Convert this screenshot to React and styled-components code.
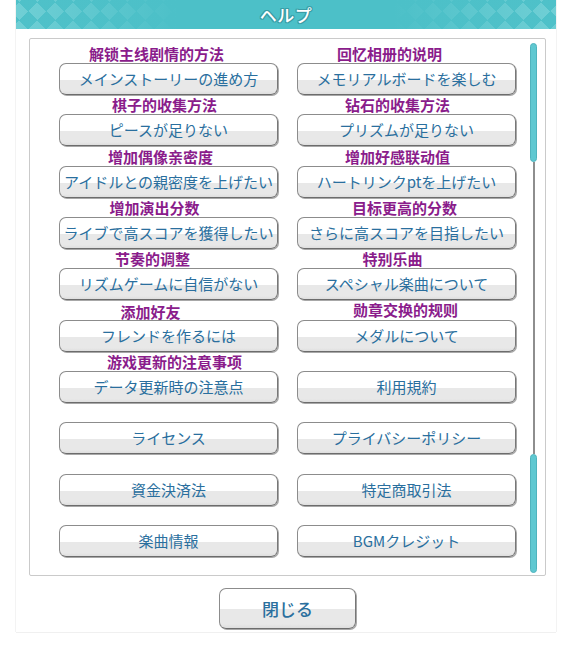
import React from "react";
import styled, { createGlobalStyle } from "styled-components";

const Global = createGlobalStyle`
  html, body { margin: 0; padding: 0; background: #ffffff; }
  body { font-family: "Noto Sans CJK JP", "Noto Sans", sans-serif; }
  * { box-sizing: border-box; }
`;

const Page = styled.div`
  width: 580px;
  height: 649px;
  background: #ffffff;
  overflow: hidden;
`;

const Dialog = styled.div`
  margin-left: 16px;
  width: 540px;
  height: 632px;
  background: #ffffff;
  box-shadow: 0 1px 0 #f0f0f0, 1px 0 0 #f3f3f3, -1px 0 0 #f3f3f3;
  display: flex;
  flex-direction: column;
`;

const Header = styled.div`
  height: 29px;
  display: flex;
  align-items: center;
  justify-content: center;
  background:
    linear-gradient(90deg, rgba(76,192,200,0) 0%, #4cc0c8 30%, #4cc0c8 70%, rgba(76,192,200,0) 100%),
    conic-gradient(from 45deg, #70cfd5 25%, #4fc1c9 0 50%, #70cfd5 0 75%, #4fc1c9 0);
  background-size: 100% 100%, 18px 18px;
  background-position: 0 0, 3px 2px;
`;

const Title = styled.h1`
  margin: 0;
  font-family: "Noto Sans CJK JP", sans-serif;
  font-size: 17px;
  font-weight: 500;
  line-height: 1;
  color: #ffffff;
  letter-spacing: 0.5px;
  text-shadow:
    1px 0 0 #3a9da6, -1px 0 0 #3a9da6, 0 1px 0 #3a9da6, 0 -1px 0 #3a9da6,
    1px 1px 0 #3a9da6, -1px -1px 0 #3a9da6, 1px -1px 0 #3a9da6, -1px 1px 0 #3a9da6;
`;

const Body = styled.div`
  padding: 9px 10px 0 13px;
`;

const ListBox = styled.div`
  height: 538px;
  border: 1px solid #cacaca;
  border-radius: 2px;
  display: flex;
`;

const Grid = styled.div`
  flex: 1;
  padding: 5px 0 0 29px;
  display: grid;
  grid-template-columns: 219px 219px;
  column-gap: 19px;
  row-gap: 0.33px;
  align-content: start;
`;

const Cell = styled.div`
  display: flex;
  flex-direction: column;
`;

const Label = styled.div`
  height: 19px;
  line-height: 19px;
  text-align: center;
  font-family: "Noto Sans CJK SC", sans-serif;
  font-size: 15px;
  font-weight: 700;
  color: #8a1c8b;
  white-space: nowrap;
  transform: translate(${(p) => p.$dx || 0}px, ${(p) => p.$dy || 0}px);
`;

const Button = styled.button`
  display: flex;
  align-items: center;
  justify-content: center;
  width: ${(p) => p.$w || 219}px;
  height: ${(p) => p.$h || 32}px;
  padding: 0 0 1px;
  border: 1px solid #8c8c8c;
  border-bottom-color: #6c6c6c;
  border-right-color: #777777;
  border-radius: 7px;
  box-shadow: 1px 1px 0 #a8a8a8;
  background: linear-gradient(180deg, #ffffff 0%, #ffffff 52%, #e8e8e8 52%, #e8e8e8 90%, #dedede 100%);
  font-family: "Noto Sans CJK JP", sans-serif;
  font-size: ${(p) => p.$fs || 15}px;
  font-weight: ${(p) => p.$fw || 400};
  color: #2a6f9e;
  white-space: nowrap;
  cursor: pointer;
`;

const Scroll = styled.div`
  width: 7px;
  margin: 4px 8px 2px 14px;
  display: flex;
  flex-direction: column;
  align-items: center;
`;

const Thumb = styled.div`
  width: 7px;
  height: 119px;
  border-radius: 4px;
  background: #5fc8d1;
  border: 1px solid #4fb3bd;
  flex-shrink: 0;
`;

const Track = styled.div`
  width: 2px;
  flex: 1;
  background: #8e8e8e;
`;

const Footer = styled.div`
  display: flex;
  justify-content: center;
  padding: 12px 0 0 3px;
`;

const items = [
  { label: "解锁主线剧情的方法", dx: -12, text: "メインストーリーの進め方" },
  { label: "回忆相册的说明", dx: -17, text: "メモリアルボードを楽しむ" },
  { label: "棋子的收集方法", dx: -4, text: "ピースが足りない" },
  { label: "钻石的收集方法", dx: -9, text: "プリズムが足りない" },
  { label: "增加偶像亲密度", dx: -8, text: "アイドルとの親密度を上げたい" },
  { label: "增加好感联动值", dx: -9, text: "ハートリンクptを上げたい" },
  { label: "增加演出分数", dx: -14, text: "ライブで高スコアを獲得したい" },
  { label: "目标更高的分数", dx: -2, text: "さらに高スコアを目指したい" },
  { label: "节奏的调整", dx: -16, text: "リズムゲームに自信がない" },
  { label: "特别乐曲", dx: -14, text: "スペシャル楽曲について" },
  { label: "添加好友", dx: -18, dy: 1, text: "フレンドを作るには" },
  { label: "勋章交换的规则", dx: -1, dy: -1, text: "メダルについて" },
  { label: "游戏更新的注意事项", dx: 6, text: "データ更新時の注意点" },
  { label: "", text: "利用規約" },
  { label: "", text: "ライセンス" },
  { label: "", text: "プライバシーポリシー" },
  { label: "", text: "資金決済法" },
  { label: "", text: "特定商取引法" },
  { label: "", text: "楽曲情報" },
  { label: "", text: "BGMクレジット" },
];

export default function App() {
  return (
    <Page>
      <Global />
      <Dialog>
        <Header>
          <Title>ヘルプ</Title>
        </Header>
        <Body>
          <ListBox>
            <Grid>
              {items.map((it, i) => (
                <Cell key={i}>
                  <Label $dx={it.dx} $dy={it.dy}>{it.label}</Label>
                  <Button>{it.text}</Button>
                </Cell>
              ))}
            </Grid>
            <Scroll>
              <Thumb />
              <Track />
              <Thumb />
            </Scroll>
          </ListBox>
        </Body>
        <Footer>
          <Button $w={137} $h={41} $fs={17} $fw={500}>閉じる</Button>
        </Footer>
      </Dialog>
    </Page>
  );
}
